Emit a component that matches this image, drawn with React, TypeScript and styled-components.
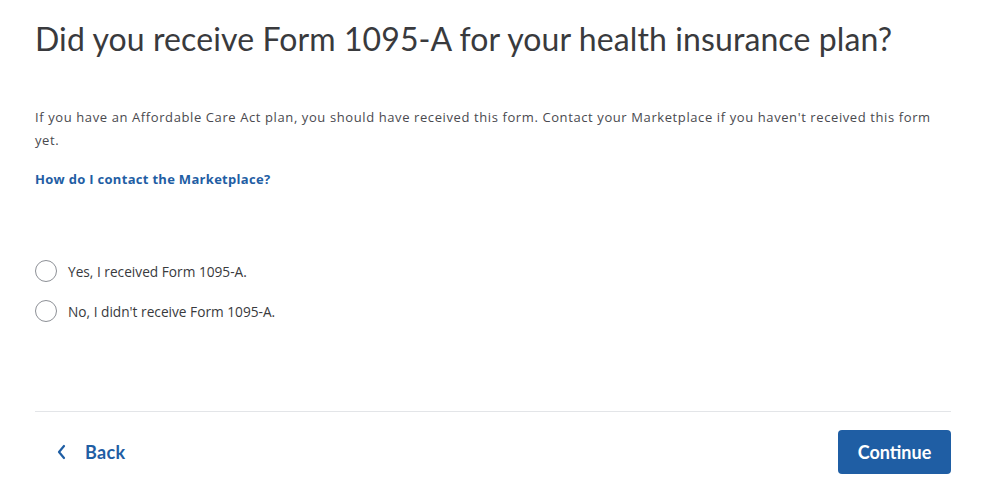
import styled, { createGlobalStyle } from 'styled-components';

const GlobalStyle = createGlobalStyle`
  html, body {
    margin: 0;
    padding: 0;
    background: #ffffff;
  }
  body {
    font-family: 'Open Sans', Lato, sans-serif;
    color: #393a3d;
  }
`;

const options = [
  'Yes, I received Form 1095-A.',
  "No, I didn't receive Form 1095-A.",
];

export default function App() {
  return (
    <>
      <GlobalStyle />
      <Page>
        <Title>Did you receive Form 1095-A for your health insurance plan?</Title>
        <Intro>
          If you have an Affordable Care Act plan, you should have received this
          form. Contact your Marketplace if you haven't received this form yet.
        </Intro>
        <HelpLink href="#">How do I contact the Marketplace?</HelpLink>
        <Options>
          {options.map((label) => (
            <Option key={label}>
              <Radio type="radio" name="form1095a" />
              <span>{label}</span>
            </Option>
          ))}
        </Options>
        <Footer>
          <BackButton type="button">
            <svg width="12" height="16" viewBox="0 0 12 16" aria-hidden="true">
              <path
                d="M8 2 L3 8 L8 14"
                fill="none"
                stroke="currentColor"
                strokeWidth="2.2"
                strokeLinecap="round"
                strokeLinejoin="round"
              />
            </svg>
            Back
          </BackButton>
          <ContinueButton type="button">Continue</ContinueButton>
        </Footer>
      </Page>
    </>
  );
}

const Page = styled.div`
  width: 916px;
  padding: 17px 0 0 35px;
  display: flex;
  flex-direction: column;
`;

const Title = styled.h1`
  margin: 0;
  font-family: Lato, sans-serif;
  font-size: 32px;
  font-weight: 400;
  line-height: 44px;
  letter-spacing: 0.1px;
  color: #393a3d;
`;

const Intro = styled.p`
  margin: 45px 0 0;
  font-size: 13px;
  line-height: 23px;
  letter-spacing: 0.6px;
  color: #4a4a4f;
  padding-right: 10px;
`;

const HelpLink = styled.a`
  margin-top: 18px;
  font-size: 13px;
  line-height: 18px;
  font-weight: 700;
  letter-spacing: 0.3px;
  color: #1f5ea4;
  text-decoration: none;
  align-self: flex-start;
`;

const Options = styled.div`
  margin-top: 72px;
  display: flex;
  flex-direction: column;
  gap: 18px;
`;

const Option = styled.label`
  display: flex;
  align-items: center;
  gap: 11px;
  font-size: 13.7px;
  color: #393a3d;
  cursor: pointer;
`;

const Radio = styled.input`
  appearance: none;
  margin: 0;
  width: 22px;
  height: 22px;
  border: 1px solid #8d9096;
  border-radius: 50%;
  background: #fff;
  cursor: pointer;
`;

const Footer = styled.div`
  margin-top: 89px;
  border-top: 1px solid #e3e5e8;
  padding-top: 18px;
  display: flex;
  justify-content: space-between;
  align-items: center;
`;

const BackButton = styled.button`
  display: flex;
  align-items: center;
  gap: 17px;
  margin-left: 21px;
  padding: 0;
  border: none;
  background: none;
  font-family: Lato, sans-serif;
  font-size: 18px;
  font-weight: 700;
  letter-spacing: 0.3px;
  color: #1f5ea4;
  cursor: pointer;
`;

const ContinueButton = styled.button`
  width: 113px;
  height: 44px;
  border: none;
  border-radius: 4px;
  background: #1f5ea4;
  color: #fff;
  font-family: Lato, sans-serif;
  font-size: 18px;
  font-weight: 700;
  cursor: pointer;
`;
